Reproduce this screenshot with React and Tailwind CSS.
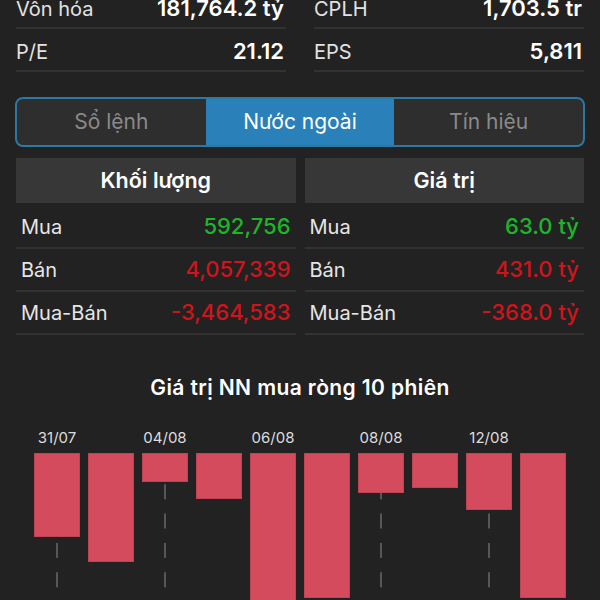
import React from "react";

const bars = [
  { label: "31/07", h: 84, dash: true },
  { label: "", h: 109 },
  { label: "04/08", h: 29, dash: true },
  { label: "", h: 46 },
  { label: "06/08", h: 160, dash: true },
  { label: "", h: 145 },
  { label: "08/08", h: 40, dash: true },
  { label: "", h: 35 },
  { label: "12/08", h: 57, dash: true },
  { label: "", h: 145 },
];

function TopRow({ label, value }) {
  return (
    <div className="flex h-[43px] items-center justify-between border-b-2 border-[#323232] pr-[2px] pt-[4px]">
      <span className="text-[20px] text-[#e2e2e2]">{label}</span>
      <span className="text-[22px] font-semibold text-white">{value}</span>
    </div>
  );
}

function DataRow({ label, value, color }) {
  return (
    <div className="flex h-[43px] items-center justify-between border-b-2 border-[#323232] px-[5px]">
      <span className="text-[20px] text-[#e6e6e6]">{label}</span>
      <span className={`text-[22px] font-medium ${color}`}>{value}</span>
    </div>
  );
}

export default function App() {
  return (
    <div
      className="h-[600px] w-[600px] overflow-hidden bg-[#222222] text-white"
      style={{ fontFamily: "Inter, 'Noto Sans', sans-serif" }}
    >
      <div className="-mt-[14px] grid grid-cols-2 gap-x-[28px] px-[16px]">
        <div>
          <TopRow label="Vốn hóa" value="181,764.2 tỷ" />
          <TopRow label="P/E" value="21.12" />
        </div>
        <div>
          <TopRow label="CPLH" value="1,703.5 tr" />
          <TopRow label="EPS" value="5,811" />
        </div>
      </div>

      <div className="mx-[15px] mt-[25px] grid h-[50px] grid-cols-3 overflow-hidden rounded-[8px] border-2 border-[#2b78a3] bg-[#2e2e2e]">
        <div className="flex items-center justify-center text-[21px] text-[#8a8a8a]">Sổ lệnh</div>
        <div className="flex items-center justify-center bg-[#2a80b9] text-[21px] text-white">Nước ngoài</div>
        <div className="flex items-center justify-center text-[21px] text-[#8a8a8a]">Tín hiệu</div>
      </div>

      <div className="mt-[11px] grid grid-cols-2 gap-x-[9px] px-[16px]">
        <div>
          <div className="flex h-[45px] items-center justify-center bg-[#373737] text-[21.5px] font-semibold text-white">
            Khối lượng
          </div>
          <div className="mt-[3px]">
            <DataRow label="Mua" value="592,756" color="text-[#1db52b]" />
            <DataRow label="Bán" value="4,057,339" color="text-[#d0141c]" />
            <DataRow label="Mua-Bán" value="-3,464,583" color="text-[#d0141c]" />
          </div>
        </div>
        <div>
          <div className="flex h-[45px] items-center justify-center bg-[#373737] text-[21.5px] font-semibold text-white">
            Giá trị
          </div>
          <div className="mt-[3px]">
            <DataRow label="Mua" value="63.0 tỷ" color="text-[#1db52b]" />
            <DataRow label="Bán" value="431.0 tỷ" color="text-[#d0141c]" />
            <DataRow label="Mua-Bán" value="-368.0 tỷ" color="text-[#d0141c]" />
          </div>
        </div>
      </div>

      <div className="mt-[41px] h-[24px] text-center text-[21px] font-semibold leading-[24px] tracking-[0.4px] text-white">
        Giá trị NN mua ròng 10 phiên
      </div>

      <div className="mt-[28px] flex gap-[8px] pl-[34px]">
        {bars.map((b, i) => (
          <div key={i} className="relative w-[46px]">
            <div className="h-[20px] whitespace-nowrap text-center text-[15px] leading-[20px] text-[#dddddd]">
              {b.label}
            </div>
            {b.dash && (
              <svg
                className="absolute left-0 top-[25px]"
                width="46"
                height="160"
                viewBox="0 0 46 160"
              >
                <line
                  x1="23"
                  y1="2"
                  x2="23"
                  y2="160"
                  stroke="#6a6a6a"
                  strokeWidth="1.5"
                  strokeDasharray="15 14.3"
                />
              </svg>
            )}
            <div
              className="relative mt-[5px] w-[46px] border border-[#bf4352] bg-[#d34b5c]"
              style={{ height: b.h }}
            />
          </div>
        ))}
      </div>
    </div>
  );
}
